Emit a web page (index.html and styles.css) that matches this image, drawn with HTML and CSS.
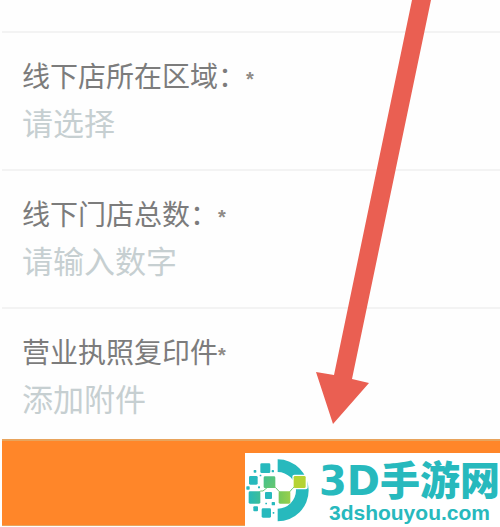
FILE: index.html
```html
<!DOCTYPE html>
<html lang="zh-CN">
<head>
  <meta charset="UTF-8" />
  <meta name="viewport" content="width=device-width, initial-scale=1.0"/>
  <title>门店信息</title>
  <link rel="stylesheet" href="styles.css">
</head>
<body>
  <div class="screen">
    <form class="shop-form">
      <div class="previous-row"></div>

      <div class="field">
        <label class="field-label" for="area">线下店所在区域：<span class="required">*</span></label>
        <select class="field-control" id="area">
          <option>请选择</option>
        </select>
      </div>

      <div class="field">
        <label class="field-label" for="total">线下门店总数：<span class="required">*</span></label>
        <input class="field-control" id="total" type="text" inputmode="numeric" placeholder="请输入数字">
      </div>

      <div class="field last">
        <label class="field-label" for="licence">营业执照复印件<span class="required">*</span></label>
        <button class="field-control" id="licence" type="button">添加附件</button>
      </div>

      <button class="submit-bar" type="submit" aria-label="提交"></button>
    </form>

    <!-- pointer down to the submit bar -->
    <svg class="arrow" viewBox="0 0 116 425" aria-hidden="true">
      <path d="M96 0H115L36 379L53 383L17 424L0 372L18 375Z"/>
    </svg>

    <div class="brand">
      <svg class="brand-mark" viewBox="15 23 192 189" aria-hidden="true">
        <defs>
          <linearGradient id="mint" x1="0" y1="0" x2="1" y2="1">
            <stop offset="0" stop-color="#43c08d"/>
            <stop offset="1" stop-color="#67c86e"/>
          </linearGradient>
          <linearGradient id="sea" x1="0" y1="0" x2="1" y2="0">
            <stop offset="0" stop-color="#27b9b8"/>
            <stop offset="1" stop-color="#3dbe98"/>
          </linearGradient>
          <linearGradient id="lime" x1="0" y1="0" x2="1" y2="0">
            <stop offset="0" stop-color="#75c85a"/>
            <stop offset="1" stop-color="#98cf4c"/>
          </linearGradient>
        </defs>
        <path fill="#27b9bd" d="M110 24A93 93 0 0 1 110 210V172A55 55 0 0 0 110 62Z"/>
        <rect x="154" y="70" width="46" height="44" rx="6" fill="#fff"/>
        <path d="M41 138L58 119H66L82 106M86 108H103L128 135M132 138L154 112L176 92" fill="none" stroke="#6fc77a" stroke-width="3"/>
        <g fill="#27b9bd">
          <rect x="58" y="36" width="30" height="29" rx="4"/>
          <rect x="24" y="74" width="26" height="26" rx="4"/>
          <rect x="72" y="122" width="21" height="21" rx="3"/>
          <rect x="62" y="171" width="28" height="28" rx="4"/>
          <rect x="37" y="165" width="14" height="15" rx="3"/>
          <rect x="38" y="56" width="8" height="8" rx="2"/>
          <rect x="92" y="56" width="7" height="7" rx="2"/>
          <rect x="56" y="70" width="5" height="5" rx="1"/>
          <rect x="16" y="105" width="10" height="10" rx="2"/>
          <rect x="51" y="105" width="6" height="6" rx="1"/>
          <rect x="92" y="152" width="10" height="10" rx="2"/>
          <rect x="73" y="154" width="5" height="5" rx="1"/>
          <rect x="95" y="182" width="5" height="5" rx="1"/>
        </g>
        <rect x="68" y="75" width="35" height="35" rx="4" fill="url(#mint)"/>
        <rect x="23" y="120" width="35" height="37" rx="4" fill="url(#sea)"/>
        <rect x="113" y="120" width="35" height="37" rx="4" fill="url(#lime)"/>
        <rect x="158" y="74" width="36" height="36" rx="4" fill="#b5d334"/>
      </svg>
      <div class="brand-text">
        <div class="brand-name"><span class="brand-latin">3D</span>手游网</div>
        <div class="brand-url">3dshouyou.com</div>
      </div>
    </div>
  </div>
</body>
</html>
```

FILE: styles.css
```css
* {
  box-sizing: border-box;
}

body {
  margin: 0;
  background: #fefefe;
  font-family: "Noto Sans CJK SC", sans-serif;
}

.screen {
  position: relative;
  overflow: hidden;
}

.shop-form {
  padding: 0 0 2px 2px;
}

.previous-row {
  height: 33px;
  border-bottom: 2px solid #f3f3f3;
}

.field {
  display: flex;
  flex-direction: column;
  height: 138px;
  padding: 21px 20px 0;
  border-bottom: 2px solid #f3f3f3;
}

.field.last {
  height: 130px;
  border-bottom: 0;
}

.field-label {
  display: flex;
  align-items: center;
  height: 42px;
  font-size: 28px;
  font-weight: 400;
  color: #7c7c7c;
}

.required {
  padding-top: 8px;
  font-family: "Liberation Sans", sans-serif;
  font-size: 20px;
  font-weight: 700;
  line-height: 20px;
  color: #8f8b86;
}

.field-control {
  appearance: none;
  width: 100%;
  height: 52px;
  margin: 0;
  padding: 0;
  border: 0;
  background: none;
  font-family: inherit;
  font-size: 31px;
  font-weight: 400;
  line-height: 52px;
  text-align: left;
  color: #c6cfd1;
}

.field-control::placeholder {
  color: #c6cfd1;
  opacity: 1;
}

.submit-bar {
  display: block;
  width: 100%;
  height: 87px;
  margin: 0;
  border: 0;
  border-top: 2px solid #e8a45c;
  border-bottom: 1px solid #e8a45c;
  background: #ff8629;
}

.arrow {
  position: absolute;
  top: 0;
  left: 63.2%;
  width: 116px;
  height: 425px;
  fill: #ea5f52;
  pointer-events: none;
}

.brand {
  position: absolute;
  right: 0;
  bottom: 0;
  display: flex;
  align-items: center;
  gap: 9px;
  height: 75px;
  padding-left: 1px;
  background: #fff;
  color: #27b9bd;
}

.brand-mark {
  width: 64px;
  height: 63px;
}

.brand-text {
  display: flex;
  flex-direction: column;
  align-items: center;
}

.brand-name {
  height: 44px;
  font-size: 40px;
  font-weight: 900;
  line-height: 40px;
  white-space: nowrap;
}

.brand-latin {
  font-family: "DejaVu Sans", sans-serif;
  font-weight: 700;
}

.brand-url {
  font-family: "Liberation Sans", sans-serif;
  font-size: 21px;
  font-weight: 700;
  line-height: 22px;
}
```
